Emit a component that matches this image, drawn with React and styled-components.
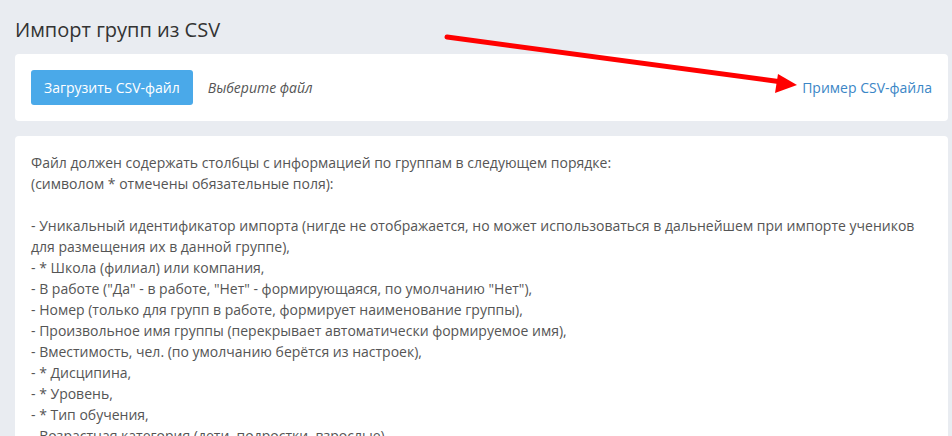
import React from 'react';
import styled, { createGlobalStyle } from 'styled-components';

const Global = createGlobalStyle`
  body { margin: 0; background: #e9ecf1; font-family: "Open Sans", "Liberation Sans", sans-serif; }
`;

const Page = styled.div`
  position: relative;
  padding: 16px 4px 0 15px;
  height: 436px;
  overflow: hidden;
  box-sizing: border-box;
`;

const Title = styled.h1`
  margin: 0 0 11px;
  font-size: 20px;
  font-weight: 400;
  color: #333;
  line-height: 27px;
`;

const Panel = styled.div`
  background: #fff;
  border-radius: 4px;
  padding: ${p => p.$pad || '16px'};
  margin-bottom: 15px;
`;

const UploadRow = styled.div`
  display: flex;
  align-items: center;
  gap: 15px;
`;

const UploadButton = styled.button`
  background: #4aa9e9;
  color: #fff;
  border: none;
  border-radius: 3px;
  height: 35px;
  padding: 0 13px;
  font-family: inherit;
  font-size: 14px;
`;

const Hint = styled.span`
  font-style: italic;
  color: #555;
  font-size: 14px;
`;

const SampleLink = styled.a`
  margin-left: auto;
  color: #3b86c6;
  font-size: 14px;
  text-decoration: none;
`;

const Info = styled.div`
  color: #555;
  font-size: 14px;
  line-height: 21px;
`;

const Arrow = styled.svg`
  position: absolute;
  left: 0;
  top: 0;
  pointer-events: none;
`;

const lines = [
  'Файл должен содержать столбцы с информацией по группам в следующем порядке:',
  '(символом * отмечены обязательные поля):',
  '',
  '- Уникальный идентификатор импорта (нигде не отображается, но может использоваться в дальнейшем при импорте учеников для размещения их в данной группе),',
  '- * Школа (филиал) или компания,',
  '- В работе ("Да" - в работе, "Нет" - формирующаяся, по умолчанию "Нет"),',
  '- Номер (только для групп в работе, формирует наименование группы),',
  '- Произвольное имя группы (перекрывает автоматически формируемое имя),',
  '- Вместимость, чел. (по умолчанию берётся из настроек),',
  '- * Дисципина,',
  '- * Уровень,',
  '- * Тип обучения,',
  '- Возрастная категория (дети, подростки, взрослые),',
];

export default function App() {
  return (
    <Page>
      <Global />
      <Title>Импорт групп из CSV</Title>
      <Panel>
        <UploadRow>
          <UploadButton>Загрузить CSV-файл</UploadButton>
          <Hint>Выберите файл</Hint>
          <SampleLink href="#">Пример CSV-файла</SampleLink>
        </UploadRow>
      </Panel>
      <Panel $pad="16px 16px 0">
        <Info>
          {lines.map((l, i) => <div key={i}>{l || '\u00a0'}</div>)}
        </Info>
      </Panel>
      <Arrow width="952" height="436">
        <line x1="447" y1="37" x2="782" y2="82" stroke="#f00" strokeWidth="5" strokeLinecap="round" />
        <polygon points="797,85 778,74 775,93" fill="#f00" />
      </Arrow>
    </Page>
  );
}
